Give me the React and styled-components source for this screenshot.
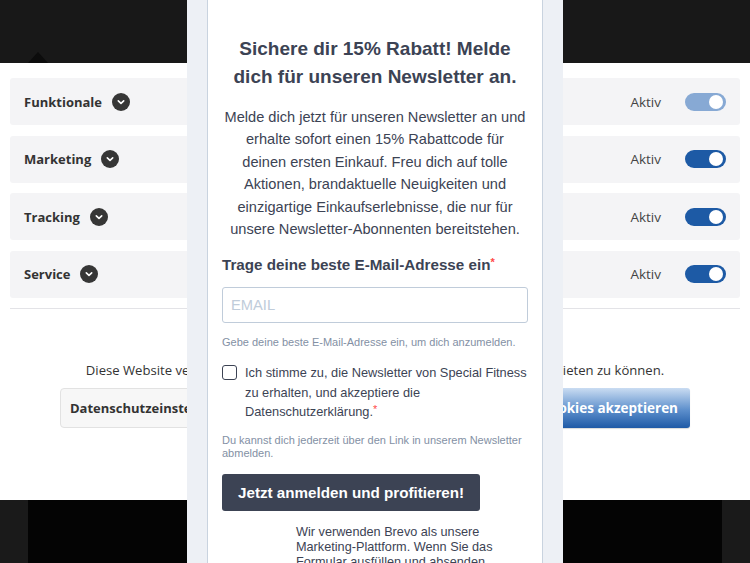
import React from 'react'
import styled, { createGlobalStyle } from 'styled-components'

const GlobalStyle = createGlobalStyle`
  html, body {
    margin: 0;
    padding: 0;
  }
  body {
    width: 750px;
    height: 563px;
    overflow: hidden;
    background: #181818;
    font-family: "Open Sans", "Liberation Sans", sans-serif;
  }
`

const Page = styled.div`
  position: relative;
  width: 750px;
  height: 563px;
  display: flex;
  flex-direction: column;
  overflow: hidden;
`

const TopBar = styled.div`
  height: 63px;
  background: #181818;
  display: flex;
  align-items: flex-end;
  padding-left: 28px;
  box-sizing: border-box;
`

const Caret = styled.div`
  width: 0;
  height: 0;
  border-left: 10px solid transparent;
  border-right: 10px solid transparent;
  border-bottom: 11px solid #0c0c0c;
`

const CookiePanel = styled.div`
  height: 437px;
  background: #fff;
  padding: 15px 10px 0;
  box-sizing: border-box;
`

const CategoryList = styled.div`
  display: flex;
  flex-direction: column;
  gap: 10.5px;
`

const CategoryRow = styled.div`
  height: 47px;
  background: #f4f4f6;
  border-radius: 3px;
  display: flex;
  align-items: center;
  padding: 0 14px;
`

const CategoryName = styled.span`
  font-size: 13px;
  font-weight: 700;
  color: #333;
`

const ChevronBadge = styled.span`
  width: 18px;
  height: 18px;
  border-radius: 50%;
  background: #363636;
  margin-left: 10px;
  display: flex;
  align-items: center;
  justify-content: center;
`

const Spacer = styled.div`
  flex: 1;
`

const StatusLabel = styled.span`
  font-size: 13.5px;
  color: #444;
  margin-right: 24px;
`

const Toggle = styled.div`
  width: 41px;
  height: 18px;
  border-radius: 9px;
  background: ${p => (p.$muted ? '#87a9d4' : '#1d5aa5')};
  display: flex;
  justify-content: flex-end;
  align-items: center;
  padding: 0 3px;
  box-sizing: border-box;
`

const Knob = styled.span`
  width: 14px;
  height: 14px;
  border-radius: 50%;
  background: #fff;
`

const Divider = styled.div`
  height: 1px;
  background: #e3e3e7;
  margin-top: 10px;
`

const Notice = styled.p`
  margin: 51px 0 0;
  text-align: center;
  font-size: 13.1px;
  line-height: 20px;
  color: #333;
`

const ButtonRow = styled.div`
  margin-top: 8px;
  display: flex;
  justify-content: space-between;
  padding: 0 50px;
`

const SettingsButton = styled.button`
  height: 40px;
  padding: 0 9px;
  background: #f7f7f7;
  border: 1px solid #e2e2e2;
  border-radius: 4px;
  font-family: "Open Sans", sans-serif;
  font-size: 13px;
  font-weight: 700;
  color: #333;
`

const AcceptButton = styled.button`
  height: 40px;
  padding: 0 12px;
  border: none;
  border-radius: 3px;
  background: linear-gradient(#cadcf2, #5d8fcc 55%, #1f5aa6);
  font-family: "Open Sans", sans-serif;
  font-size: 13.5px;
  font-weight: 700;
  color: #fff;
  box-shadow: 0 1px 1px rgba(0, 0, 0, 0.15);
`

const BottomStrip = styled.div`
  flex: 1;
  display: flex;
  background: #1a1a1a;
  padding: 0 28px;
`

const Hero = styled.div`
  flex: 1;
  background: #040404;
`

const NewsletterOverlay = styled.div`
  position: absolute;
  top: 0;
  left: 187px;
  width: 376px;
  height: 563px;
  background: #edf0f5;
  padding: 0 20px;
  box-sizing: border-box;
  overflow: hidden;
  font-family: "Liberation Sans", Arial, sans-serif;
  color: #3c4354;
`

const FormCard = styled.form`
  margin-top: -20px;
  background: #fff;
  border: 1px solid #c9d3df;
  padding: 54px 14px 40px;
`

const Heading = styled.h2`
  margin: 0 -10px;
  text-align: center;
  font-size: 19px;
  line-height: 28px;
  font-weight: 700;
`

const Intro = styled.p`
  margin: 15px -10px 0;
  text-align: center;
  font-size: 14.6px;
  line-height: 22.4px;
`

const FieldLabel = styled.label`
  display: block;
  margin-top: 15px;
  font-size: 15.2px;
  line-height: 20px;
  font-weight: 700;
  white-space: nowrap;
`

const Required = styled.span`
  color: #ff4949;
  font-size: 11px;
  vertical-align: top;
  line-height: 14px;
`

const EmailInput = styled.input`
  display: block;
  width: 100%;
  height: 36px;
  margin-top: 12px;
  box-sizing: border-box;
  border: 1px solid #c0ccda;
  border-radius: 3px;
  padding: 0 8px;
  font-family: "Liberation Sans", Arial, sans-serif;
  font-size: 14.7px;
  color: #3c4354;
  &::placeholder {
    color: #c0ccda;
  }
`

const Hint = styled.p`
  margin: ${p => p.$top || 12}px 0 0;
  font-size: 11px;
  line-height: ${p => p.$lh || 14}px;
  color: #8390a4;
`

const ConsentRow = styled.label`
  display: flex;
  gap: 8px;
  margin-top: 14px;
  align-items: flex-start;
`

const CheckBox = styled.span`
  flex: none;
  width: 15px;
  height: 15px;
  margin-top: 2px;
  box-sizing: border-box;
  border: 1.5px solid #3c4354;
  border-radius: 3px;
  background: #fff;
`

const ConsentText = styled.span`
  font-size: 12.8px;
  line-height: 19.5px;
  white-space: nowrap;
`

const SubmitButton = styled.button`
  display: block;
  margin-top: 14px;
  height: 37px;
  padding: 0 16px;
  border: none;
  border-radius: 3px;
  background: #3c4354;
  color: #fff;
  font-family: "Liberation Sans", Arial, sans-serif;
  font-size: 15.2px;
  font-weight: 700;
`

const BrevoNote = styled.p`
  margin: 14px 0 0;
  padding-left: 74px;
  max-width: 206px;
  font-size: 12.7px;
  line-height: 15px;
`

const Chevron = () => (
  <svg width="18" height="18" viewBox="0 0 18 18">
    <polyline points="6.3,7.8 9,10.4 11.7,7.8" fill="none" stroke="#fff" strokeWidth="1.6" strokeLinecap="round" strokeLinejoin="round" />
  </svg>
)

const categories = [
  { name: 'Funktionale', muted: true },
  { name: 'Marketing' },
  { name: 'Tracking' },
  { name: 'Service' },
]

export default function App() {
  return (
    <Page>
      <GlobalStyle />
      <TopBar>
        <Caret />
      </TopBar>

      <CookiePanel>
        <CategoryList>
          {categories.map(c => (
            <CategoryRow key={c.name}>
              <CategoryName>{c.name}</CategoryName>
              <ChevronBadge><Chevron /></ChevronBadge>
              <Spacer />
              <StatusLabel>Aktiv</StatusLabel>
              <Toggle $muted={c.muted}><Knob /></Toggle>
            </CategoryRow>
          ))}
        </CategoryList>
        <Divider />
        <Notice>
          Diese Website verwendet Cookies, um Ihnen die bestmögliche Funktionalität bieten zu können.
        </Notice>
        <ButtonRow>
          <SettingsButton>Datenschutzeinstellungen</SettingsButton>
          <AcceptButton>Alle Cookies akzeptieren</AcceptButton>
        </ButtonRow>
      </CookiePanel>

      <BottomStrip>
        <Hero />
      </BottomStrip>

      <NewsletterOverlay>
        <FormCard onSubmit={e => e.preventDefault()}>
          <Heading>
            Sichere dir 15% Rabatt! Melde<br />
            dich für unseren Newsletter an.
          </Heading>
          <Intro>
            Melde dich jetzt für unseren Newsletter an und<br />
            erhalte sofort einen 15% Rabattcode für<br />
            deinen ersten Einkauf. Freu dich auf tolle<br />
            Aktionen, brandaktuelle Neuigkeiten und<br />
            einzigartige Einkaufserlebnisse, die nur für<br />
            unsere Newsletter-Abonnenten bereitstehen.
          </Intro>
          <FieldLabel htmlFor="email_field">
            Trage deine beste E-Mail-Adresse ein<Required>*</Required>
          </FieldLabel>
          <EmailInput id="email_field" type="email" placeholder="EMAIL" />
          <Hint>Gebe deine beste E-Mail-Adresse ein, um dich anzumelden.</Hint>
          <ConsentRow>
            <CheckBox />
            <ConsentText>
              Ich stimme zu, die Newsletter von Special Fitness<br />
              zu erhalten, und akzeptiere die<br />
              Datenschutzerklärung.<Required>*</Required>
            </ConsentText>
          </ConsentRow>
          <Hint $top={12} $lh={13}>
            Du kannst dich jederzeit über den Link in unserem Newsletter<br />
            abmelden.
          </Hint>
          <SubmitButton type="submit">Jetzt anmelden und profitieren!</SubmitButton>
          <BrevoNote>
            Wir verwenden Brevo als unsere Marketing-Plattform. Wenn Sie das Formular ausfüllen und absenden, bestätigen Sie, dass die von Ihnen angegebenen Informationen an Brevo übertragen werden.
          </BrevoNote>
        </FormCard>
      </NewsletterOverlay>
    </Page>
  )
}
